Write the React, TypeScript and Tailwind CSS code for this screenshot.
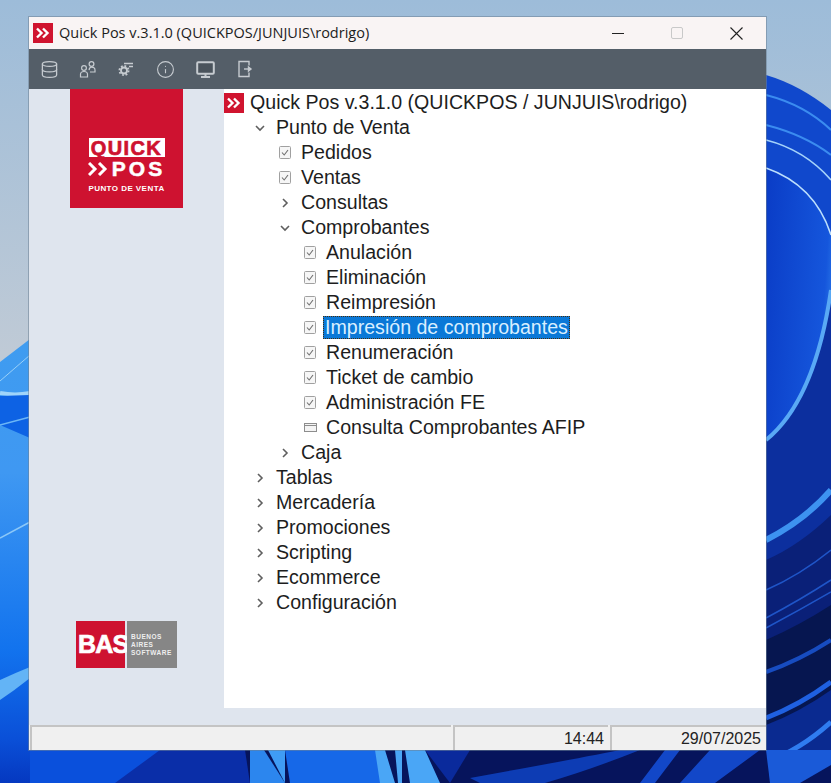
import { Database, Info } from "lucide-react";

type Kind = "root" | "open" | "closed" | "check" | "form";

const rows: { level: number; kind: Kind; label: string; selected?: boolean }[] = [
  { level: 0, kind: "root", label: "Quick Pos v.3.1.0 (QUICKPOS / JUNJUIS\\rodrigo)" },
  { level: 1, kind: "open", label: "Punto de Venta" },
  { level: 2, kind: "check", label: "Pedidos" },
  { level: 2, kind: "check", label: "Ventas" },
  { level: 2, kind: "closed", label: "Consultas" },
  { level: 2, kind: "open", label: "Comprobantes" },
  { level: 3, kind: "check", label: "Anulación" },
  { level: 3, kind: "check", label: "Eliminación" },
  { level: 3, kind: "check", label: "Reimpresión" },
  { level: 3, kind: "check", label: "Impresión de comprobantes", selected: true },
  { level: 3, kind: "check", label: "Renumeración" },
  { level: 3, kind: "check", label: "Ticket de cambio" },
  { level: 3, kind: "check", label: "Administración FE" },
  { level: 3, kind: "form", label: "Consulta Comprobantes AFIP" },
  { level: 2, kind: "closed", label: "Caja" },
  { level: 1, kind: "closed", label: "Tablas" },
  { level: 1, kind: "closed", label: "Mercadería" },
  { level: 1, kind: "closed", label: "Promociones" },
  { level: 1, kind: "closed", label: "Scripting" },
  { level: 1, kind: "closed", label: "Ecommerce" },
  { level: 1, kind: "closed", label: "Configuración" },
];

const indent = ["pl-0", "pl-[25px]", "pl-[50px]", "pl-[75px]"];

function AppMark() {
  return (
    <svg width="20" height="20" viewBox="0 0 20 20" className="shrink-0">
      <rect width="20" height="20" fill="#d0142f" />
      <path d="M4 5.5 8.5 10 4 14.5M10 5.5 14.5 10 10 14.5" fill="none" stroke="#fff" strokeWidth="2.4" />
    </svg>
  );
}

function TreeIcon({ kind }: { kind: Kind }) {
  if (kind === "open")
    return (
      <svg width="10" height="8" viewBox="0 0 10 8">
        <path d="M1 2 5 6 9 2" fill="none" stroke="#5f5f5f" strokeWidth="1.6" />
      </svg>
    );
  if (kind === "closed")
    return (
      <svg width="8" height="10" viewBox="0 0 8 10">
        <path d="M2 1 6 5 2 9" fill="none" stroke="#5f5f5f" strokeWidth="1.6" />
      </svg>
    );
  if (kind === "form")
    return (
      <svg width="13" height="11" viewBox="0 0 13 11">
        <rect x="0.5" y="1.5" width="12" height="8" fill="#f4f4f4" stroke="#8d8d8d" />
        <path d="M1 3.5H12" stroke="#8d8d8d" />
      </svg>
    );
  return (
    <svg width="12" height="13" viewBox="0 0 12 13">
      <rect x="0.5" y="0.5" width="11" height="12" rx="1" fill="#f6f6f6" stroke="#a0a0a0" />
      <path d="M3 6.5 5.2 9 9 4" fill="none" stroke="#6e6e6e" strokeWidth="1.1" />
    </svg>
  );
}

function TreeRow({ level, kind, label, selected }: (typeof rows)[number]) {
  return (
    <div className={`flex h-[25px] items-center ${indent[level]}`}>
      {kind === "root" ? (
        <span className="flex w-[26px] shrink-0 items-center">
          <AppMark />
        </span>
      ) : (
        <span className="mr-[5px] flex w-[22px] shrink-0 items-center justify-center">
          <TreeIcon kind={kind} />
        </span>
      )}
      {selected ? (
        <span className="-ml-[3px] flex h-[23px] items-center border border-dotted border-[#4a2c08] bg-[#0a78d7] px-[1px] text-[#d9efff]">
          {label}
        </span>
      ) : (
        <span>{label}</span>
      )}
    </div>
  );
}

function Toolbar() {
  const color = "#c6cbd0";
  return (
    <div className="flex h-[40px] items-center bg-[#545e68] pl-[11px]">
      <span className="flex w-[39px] justify-start">
        <Database size={19} color={color} strokeWidth={1.6} />
      </span>
      <span className="flex w-[38px] justify-start">
        <svg width="18" height="18" viewBox="0 0 18 18" fill="none" stroke={color} strokeWidth="1.2">
          <circle cx="5" cy="8" r="2.4" />
          <path d="M1.5 17v-2.5c0-2 1.5-3 3.5-3s3.5 1 3.5 3V17z" />
          <circle cx="12.5" cy="4" r="2.4" />
          <path d="M10 10c.4-1.8 1.2-2.8 2.6-2.8 2 0 3.4 1 3.4 3V12h-5" />
        </svg>
      </span>
      <span className="flex w-[39px] justify-start">
        <svg width="18" height="18" viewBox="0 0 18 18" fill="none" stroke={color}>
          <circle cx="7" cy="10.5" r="4.6" strokeWidth="1.8" strokeDasharray="1.8 1.8" />
          <circle cx="7" cy="10.5" r="3" strokeWidth="1.8" />
          <path d="M7 3.5h9M12 6.5h4" strokeWidth="1.4" />
        </svg>
      </span>
      <span className="flex w-[40px] justify-start">
        <Info size={19} color={color} strokeWidth={1.4} />
      </span>
      <span className="flex w-[39px] justify-start">
        <svg width="19" height="19" viewBox="0 0 19 19" fill="none" stroke={color}>
          <rect x="1.2" y="2.2" width="16.6" height="11.6" rx="1" strokeWidth="2" fill="#4a535c" />
          <path d="M9.5 14v2.5M5 17h9" strokeWidth="2" />
        </svg>
      </span>
      <span className="flex justify-start">
        <svg width="18" height="18" viewBox="0 0 18 18" fill="none" stroke={color} strokeWidth="1.4">
          <path d="M14 5.5V1.5H4v15h10v-4" />
          <path d="M9 9h6" />
          <path d="M13.5 7 16 9l-2.5 2z" fill={color} />
        </svg>
      </span>
    </div>
  );
}

function QuickPosLogo() {
  return (
    <div className="ml-[41px] flex h-[119px] w-[113px] flex-col items-center bg-[#ce1230] pt-[49px] font-['Liberation_Sans',sans-serif] text-white">
      <div className="flex h-[19px] w-[76px] items-center justify-center bg-white text-[20px] font-bold tracking-[1.4px] text-[#ce1230] [-webkit-text-stroke:0.7px_#ce1230]">
        QUICK
      </div>
      <div className="mt-[2px] flex h-[20px] items-center">
        <svg width="22" height="14" viewBox="0 0 22 14" className="mr-[2px]">
          <path d="M1 1 7 7 1 13M11 1 17 7 11 13" fill="none" stroke="#fff" strokeWidth="3" />
        </svg>
        <span className="text-[21px] font-bold tracking-[3px] [-webkit-text-stroke:0.5px_#fff]">POS</span>
      </div>
      <div className="mt-[5px] text-[8px] leading-[10px] font-bold tracking-[0.45px]">PUNTO DE VENTA</div>
    </div>
  );
}

function BasLogo() {
  return (
    <div className="mb-[57px] ml-[47px] flex h-[47px] w-[101px] gap-[2px] font-['Liberation_Sans',sans-serif]">
      <div className="flex w-[49px] items-center bg-[#ce1230] pl-[2px] text-[25px] font-bold tracking-[-0.8px] whitespace-nowrap text-white [-webkit-text-stroke:0.7px_#fff]">
        BAS
      </div>
      <div className="flex w-[50px] flex-col justify-center bg-[#868686] pl-[4px] text-[6.5px] leading-[8px] font-bold tracking-[0.5px] text-[#eeeeee]">
        <span>BUENOS</span>
        <span>AIRES</span>
        <span>SOFTWARE</span>
      </div>
    </div>
  );
}

function Wallpaper() {
  return (
    <svg className="absolute inset-0" width="831" height="783" viewBox="0 0 831 783">
      <defs>
        <linearGradient id="sky" x1="0" y1="0" x2="0" y2="1">
          <stop offset="0" stopColor="#9dbcd9" />
          <stop offset="0.45" stopColor="#bfcad6" />
        </linearGradient>
        <linearGradient id="leftBlue" x1="0" y1="0" x2="0" y2="1">
          <stop offset="0" stopColor="#3f9cf0" />
          <stop offset="0.3" stopColor="#3f98f2" />
          <stop offset="0.7" stopColor="#1273ee" />
          <stop offset="0.9" stopColor="#0a50d8" />
          <stop offset="1" stopColor="#0538c0" />
        </linearGradient>
        <linearGradient id="lobe" x1="0" y1="0" x2="1" y2="0.6">
          <stop offset="0" stopColor="#0a3cc6" />
          <stop offset="0.75" stopColor="#1556dc" />
          <stop offset="1" stopColor="#3f9af5" />
        </linearGradient>
      </defs>
      <rect width="831" height="783" fill="url(#sky)" />
      {/* left of the window */}
      <path d="M0 362 30 339V783H0Z" fill="url(#leftBlue)" />
      <path d="M0 381 30 355" stroke="#9ad0f8" strokeWidth="1" />
      <path d="M0 393Q15 396 30 393" stroke="#9fd4fa" strokeWidth="4" fill="none" />
      <path d="M0 396 30 395V438L0 425Z" fill="#0d62e4" />
      <path d="M0 425 30 417" stroke="#6cb6f6" strokeWidth="1.5" />
      <path d="M0 538 30 522" stroke="#8cc8f8" strokeWidth="1.5" />
      <path d="M0 680Q15 673 30 667V678Q15 690 0 700Z" fill="#63b4f6" />

      {/* right of the window */}
      <path d="M766 75Q800 85 831 110V783H766Z" fill="#1048cc" />
      <path d="M766 95Q805 105 831 130M766 125Q805 135 831 155" fill="none" stroke="#3b8cf0" strokeWidth="2" />
      <path d="M766 140Q805 150 831 180" fill="none" stroke="#a5d3fa" strokeWidth="1.5" />
      <path d="M766 168Q815 185 831 235V783H766Z" fill="url(#lobe)" />
      <path d="M766 168Q815 185 831 235" fill="none" stroke="#bcdffc" strokeWidth="1.5" />
      <path d="M766 470V440Q815 400 831 290V783H766Z" fill="#0c2f9e" />
      <path d="M766 440Q815 400 831 290" fill="none" stroke="#59a9f5" strokeWidth="4" />
      <path d="M766 540Q805 520 831 490" fill="none" stroke="#3d92f0" strokeWidth="6" />
      <path d="M766 560Q800 545 831 515V783H766Z" fill="#0a2078" />
      <path d="M766 590Q800 575 831 550M766 618Q800 600 831 580M766 628Q800 610 831 592" fill="none" stroke="#1f55c8" strokeWidth="1.5" />
      <path d="M766 640Q800 625 831 605V783H766Z" fill="#061650" />
      <path d="M766 672Q800 660 831 640" fill="none" stroke="#174cc0" strokeWidth="4" />
      <path d="M766 718Q800 705 831 682" fill="none" stroke="#1f60e0" strokeWidth="5" />
      <path d="M766 725Q800 712 831 690V783H766Z" fill="#0a2a90" />
      <path d="M766 762Q800 750 831 722" fill="none" stroke="#2f7cf0" strokeWidth="5" />

      {/* below the window */}
      <rect x="30" y="750" width="801" height="33" fill="#06145c" />
      <path d="M30 750H245L230 783H30Z" fill="#0a50dc" />
      <path d="M115 783 160 750H245L250 783Z" fill="#0a2ea8" />
      <path d="M250 750H264L285 783H250Z" fill="#2c86ee" />
      <path d="M268 750H285V783Z" fill="#3f9cf5" />
      <path d="M285 750H378L382 783H290Z" fill="#1668e8" />
      <path d="M375 750H385L395 783H380ZM395 750H402V783H398ZM405 750H425L440 783H410Z" fill="#4aa6f6" />
      <path d="M425 750H470L450 783Z" fill="#0a2a9c" />
      <path d="M470 778Q570 760 620 750H640Q590 770 545 783H480Z" fill="#0d3cb4" />
      <path d="M640 783 665 750H680L655 783ZM680 783 710 750H760L715 783Z" fill="#1247c8" />
      <path d="M766 750H831V765L800 783H770Z" fill="#1a5ad8" />
    </svg>
  );
}

export default function App() {
  return (
    <div className="relative h-[783px] w-[831px] overflow-hidden">
      <Wallpaper />
      <div className="relative pt-[17px] pl-[29px]">
        <div className="flex h-[733px] w-[737px] flex-col shadow-[0_0_0_1px_rgba(110,130,150,0.55)]">
          {/* title bar */}
          <div className="flex h-[32px] items-center bg-[#f9f4f4] pl-[4px]">
            <AppMark />
            <span className="ml-[6px] font-['Open_Sans',sans-serif] text-[14.5px] text-[#1c1c1c]">
              Quick Pos v.3.1.0 (QUICKPOS/JUNJUIS\rodrigo)
            </span>
            <div className="ml-auto flex items-center">
              <span className="mr-[47px] h-[1px] w-[12px] bg-[#222]" />
              <span className="mr-[47px] h-[12px] w-[12px] rounded-[2px] border border-[#c9c9c9]" />
              <svg width="13" height="13" viewBox="0 0 13 13" className="mr-[23px]">
                <path d="M.5.5 12.5 12.5M12.5.5.5 12.5" stroke="#222" strokeWidth="1.1" />
              </svg>
            </div>
          </div>
          <Toolbar />
          {/* body */}
          <div className="flex min-h-0 flex-1 bg-[#dfe5ee]">
            <div className="flex w-[195px] shrink-0 flex-col justify-between">
              <QuickPosLogo />
              <BasLogo />
            </div>
            <div className="mb-[17px] flex-1 bg-white pt-[1px] font-['Liberation_Sans',sans-serif] text-[19.6px] text-[#1d1d1d]">
              {rows.map((r) => (
                <TreeRow key={r.label} {...r} />
              ))}
            </div>
          </div>
          {/* status bar */}
          <div className="flex h-[25px] gap-[2px] bg-[#f0f0f0] font-['Liberation_Sans',sans-serif] text-[16px] text-[#222]">
            <div className="ml-[1px] w-[421px] border-t-2 border-l-2 border-[#c4c4c4]" />
            <div className="flex w-[155px] items-center justify-end border-t-2 border-l-2 border-[#c4c4c4] pr-[4px]">14:44</div>
            <div className="flex flex-1 items-center justify-end border-t-2 border-l-2 border-[#c4c4c4] pr-[5px]">29/07/2025</div>
          </div>
        </div>
      </div>
    </div>
  );
}
